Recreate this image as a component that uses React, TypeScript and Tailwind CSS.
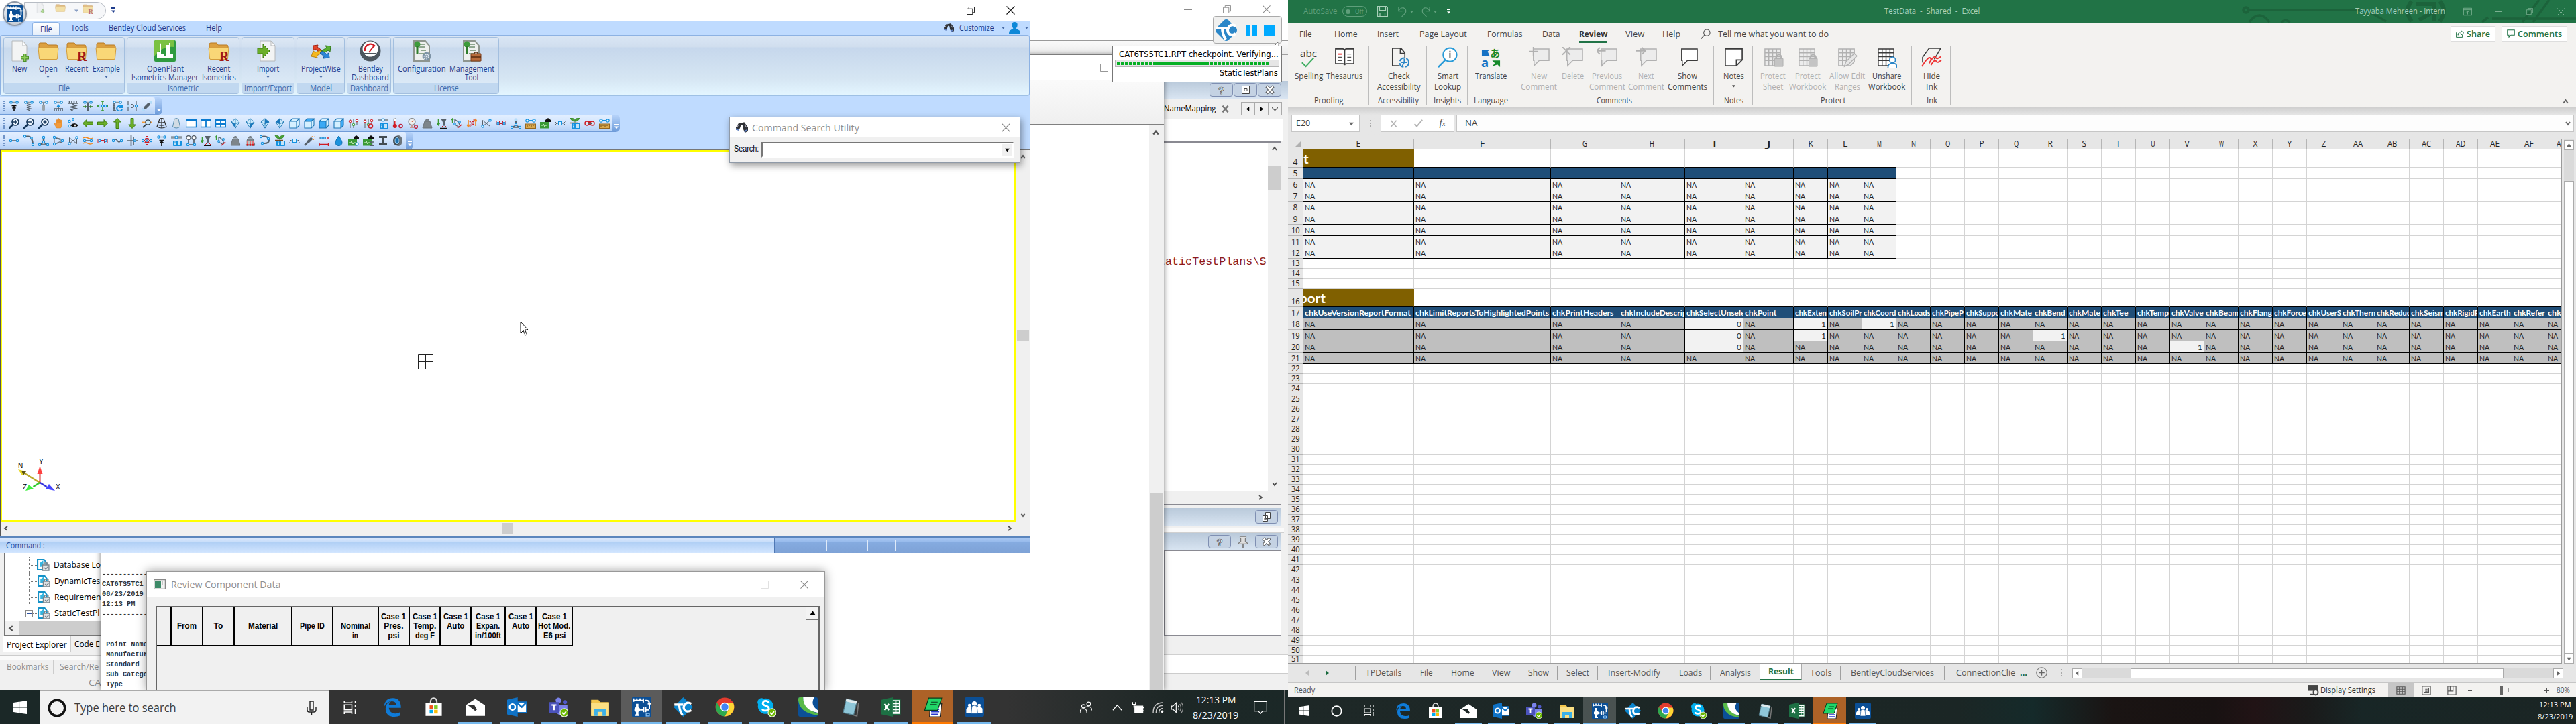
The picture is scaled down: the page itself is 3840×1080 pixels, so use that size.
import { useLayoutEffect, useRef, useState } from "react";
import type { ReactNode } from "react";

/* Text squeezed or stretched horizontally to a known width. */
function T({ w, className = "", children }: { w: number; className?: string; children: ReactNode }) {
  const ref = useRef<HTMLSpanElement>(null);
  const [s, setS] = useState(1);
  useLayoutEffect(() => {
    const n = ref.current?.offsetWidth || w;
    setS(w / n);
  }, [w, children]);
  return (
    <span className={"flex shrink-0 justify-start whitespace-pre " + className} style={{ width: w }}>
      <span ref={ref} className="block shrink-0 origin-left" style={{ transform: `scaleX(${s})` }}>
        {children}
      </span>
    </span>
  );
}

/* A row whose items are centred on the given offsets from its left edge. */
type Item = [number, ReactNode];
function Track({ items, className = "", from = 0 }: { items: Item[]; className?: string; from?: number }) {
  let prev = from;
  return (
    <div className={"flex shrink-0 " + className}>
      {items.map(([c, el], i) => {
        const m = c - prev;
        prev = c;
        return (
          <div key={i} className="flex w-0 shrink-0 justify-center" style={{ marginLeft: m }}>
            <div className="shrink-0">{el}</div>
          </div>
        );
      })}
    </div>
  );
}

function Svg({ w = 16, h = w, vb = "0 0 16 16", className = "", children }: { w?: number; h?: number; vb?: string; className?: string; children: ReactNode }) {
  return (
    <svg width={w} height={h} viewBox={vb} preserveAspectRatio="none" className={"block shrink-0 " + className} fill="none">
      {children}
    </svg>
  );
}

const Chev = ({ d, c = "#505050", s = 8 }: { d: "u" | "d" | "l" | "r"; c?: string; s?: number }) => (
  <Svg w={s} vb="0 0 8 8">
    <path d={{ u: "M1 6l3-4 3 4", d: "M1 2l3 4 3-4", l: "M6 1L2 4l4 3", r: "M2 1l4 3-4 3" }[d]} stroke={c} strokeWidth="1.8" />
  </Svg>
);
const Tri = ({ d = "d", c = "#4a6da8", s = 6 }: { d?: "u" | "d" | "l" | "r"; c?: string; s?: number }) => (
  <Svg w={s} vb="0 0 8 8">
    <path d={{ u: "M0 7L4 1l4 6z", d: "M0 2h8L4 7z", l: "M6 0v8L1 4z", r: "M2 0v8l5-4z" }[d]} fill={c} />
  </Svg>
);
const Min = ({ c, w = 12 }: { c: string; w?: number }) => <Svg w={w} h={12} vb="0 0 12 12"><path d="M0 6.500h12" stroke={c} /></Svg>;
const Restore = ({ c, s = 13 }: { c: string; s?: number }) => (
  <Svg w={s} vb="0 0 13 13"><path d="M.5 3.500h9v9h-9zM3.500 3.500v-3h9v9h-3" stroke={c} /></Svg>
);
const Max = ({ c, s = 13 }: { c: string; s?: number }) => <Svg w={s} vb="0 0 13 13"><path d="M.5 .5h12v12h-12z" stroke={c} /></Svg>;
const Close = ({ c, s = 13 }: { c: string; s?: number }) => <Svg w={s} vb="0 0 13 13"><path d="M.5.5l12 12M12.500.5l-12 12" stroke={c} strokeWidth="1.100" /></Svg>;

/* ---------- toolbar icons ---------- */
const N = (x: number, y: number, r = 1.6) => <circle cx={x} cy={y} r={r} fill="#e8f6ff" stroke="#1592e0" strokeWidth="1.2" />;
const gray = "#56616b";
const top = <><path d="M1 2.500h14" stroke="#8b969e" strokeWidth="1.600" />{N(3.5, 2.5)}{N(12.5, 2.5)}</>;
const pair = <><path d="M1 8h14" stroke={gray} strokeWidth="1.400" />{N(3, 8)}{N(13, 8)}</>;
const info = <><rect x="3" y="8" width="13" height="8" rx="1" fill="#1592e0" /><path d="M6 9.500v1M6 11.500v3M10 10h4M10 12h4M10 14h4" stroke="#fff" strokeWidth="1.400" /></>;
const weight = <path d="M5.500 4a2.500 2.500 0 115 0M4 5h8l3 10H1z" fill="#7d858b" stroke="#6b7379" />;
const house = <><rect y="6" width="13" height="9.500" fill="#3a9a35" /><path d="M8 6V3l4-3 4 3v3z" fill="#111" /><path d="M1 11h3l1-2 2 4 1-2h3" stroke="#d5f5d0" /></>;
const ruler = <><path d="M4 4h8" stroke="#1592e0" strokeWidth="2" />{N(3, 4, 2.2)}{N(13, 4, 2.2)}<rect x=".5" y="9" width="15" height="6.500" fill="#d9a94e" stroke="#94661f" /><path d="M3 10v3M6 10v2M9 10v3M12 10v2" stroke="#6d4915" /></>;
const valve = <><path d="M2.500 3.500v9l11-9v9z" stroke={gray} />{N(2.5, 12.5)}{N(13.5, 3.5)}</>;
const redPair = <><path d="M3 8h10" stroke="#d01c24" strokeWidth="2" /><path d="M1 5v6M15 5v6M5.500 5v6M10.500 5v6" stroke="#d01c24" />{N(3.5, 8)}{N(12.5, 8)}</>;
const plusNode = <><path d="M8 4v8" stroke={gray} strokeWidth="2.500" /><path d="M1.500 14L8 11l6.500 3M1.500 14h13" stroke={gray} strokeWidth="1.400" />{N(8, 3)}{N(2, 14)}{N(14, 14)}{N(8, 10)}</>;
const redCross = <><path d="M8 1v5M8 10v5M1 8h4M11 8h4" stroke="#d01c24" strokeWidth="2" strokeDasharray="2 1" /><path d="M5 5l2 2M11 5L9 7M5 11l2-2M11 11L9 9" stroke="#d01c24" strokeWidth="2" />{N(2, 8)}{N(14, 8)}{N(8, 8, 1.2)}</>;
const mag = (inner: string) => <><circle cx="10" cy="6" r="5" fill="#eef6ff" stroke="#14365a" strokeWidth="1.700" /><path d="M6 10L1 15" stroke="#14365a" strokeWidth="2.600" strokeLinecap="round" /><path d={inner} stroke="#14365a" strokeWidth="1.600" /></>;
const arrow = (r: number) => <path transform={`rotate(${r} 8 8)`} d="M.5 8L6 2.500V6h9.500v4H6v3.500z" fill="#6aae28" stroke="#3f7d10" />;
const pane = (d: string) => <><path d="M.5 2.500h15v11H.5z" fill="#fff" stroke="#0b7bd0" strokeWidth="1.400" /><path d="M0 2h16v3H0z" fill="#0b7bd0" /><path d={d} stroke="#0b7bd0" strokeWidth="1.800" /></>;
const dia = (d: string) => <><path d="M8 .8L14 6l-6 9.200L2 6z" fill="#c9e9fc" stroke="#2a7fb8" /><path d={d} fill="#1777bd" /><path d="M2 6l6 3 6-3M8 9v6M8 1v8" stroke="#2a7fb8" strokeWidth=".8" /></>;
const cube = (t: string, f: string, s: string) => <><path d="M1 5h10v10H1z" fill={f} /><path d="M1 5l4-4h10l-4 4z" fill={t} /><path d="M11 5l4-4v10l-4 4z" fill={s} /><path d="M1 5h10v10H1zM1 5l4-4h10l-4 4M15 1v10l-4 4" stroke="#1c76b5" strokeWidth="1.100" /></>;
const lt = "#d5f0ff", bl = "#3ba9f5";
const slid = <><path d="M3 1v14M8 1v14M13 1v9" stroke="#707a82" strokeWidth="1.300" /><circle cx="3" cy="5" r="1.800" fill="#fff" stroke="#d01c24" /><circle cx="8" cy="10" r="1.800" fill="#fff" stroke="#3a9a35" /><circle cx="13" cy="4" r="1.800" fill="#fff" stroke="#d01c24" /></>;
const infoNode = <><path d="M0 3h16" stroke="#8b969e" strokeWidth="3.500" />{N(8, 3, 2)}{info}</>;
const drill = <><path d="M2.500 2v8M.5 7.500l2 3 2-3" stroke="#3a9a35" strokeWidth="1.600" /><path d="M6 1h9l-2 4-1.500 7h-1L8.500 5z" fill={gray} /><path d="M9 12l-2 2M13 12l2 2" stroke="#d01c24" /><path d="M5 15.300h11" stroke="#111" strokeWidth="1.200" /></>;
const rota = <><path d="M1.500 1v6M0 3l1.500-2L3 3" stroke="#3a9a35" strokeWidth="1.300" /><path d="M5 2l5 4 3 6M5 2v8l7 4" stroke={gray} strokeWidth="1.200" /><path d="M9 15l6-5" stroke="#d01c24" strokeWidth="1.500" />{N(5, 9, 1.3)}{N(12, 6, 1.3)}</>;
const plant = <><path d="M8 8V4M8 5C4 5 2 3 1 0c4 0 7 1 7 5zM8 4c0-3 3-4 7-4-1 3-3 5-7 5" fill="#4aa336" stroke="#2f7d22" strokeWidth=".7" /><path d="M1 7.500h12" stroke="#7b4a21" strokeWidth="1.500" />{info}</>;
const flow = <><path d="M.5 5.500L3 8 .5 10.500M15.500 5.500L13 8l2.500 2.500M3 8h10" stroke={gray} /><rect x="5.500" y="5.500" width="5" height="5" fill="#d5f0ff" stroke="#1592e0" /></>;

const row1: ReactNode[] = [
  <>{top}<path d="M4.500 7.500h7M8 16V9M5.500 11.500L8 9l2.500 2.500" stroke="#111" strokeWidth="1.700" /></>,
  <>{top}<path d="M5 4.500l6 1.500-6 1.500 6 1.500-6 1.500 6 1.500-5 1.500 4 1.500" stroke={gray} strokeWidth="1.200" /></>,
  <>{top}<path d="M8 3v4" stroke={gray} strokeWidth="1.500" /><rect x="6" y="6" width="4" height="9" rx="1.500" fill="#9aa3a9" /></>,
  <>{top}<path d="M8 5l2.500 4h-5z" fill="#1592e0" /><path d="M1 12h14M2 12v4M5 12v4M8 9v7M11 12v4M14 12v4" stroke={gray} strokeWidth="1.600" /></>,
  <><path d="M1 4h14M2.500 0v4M6 0v4M9.500 0v4M13 0v4" stroke={gray} strokeWidth="1.600" /><path d="M8 4v2l4 1.500-8 2 8 2-7 2L8 16" stroke={gray} strokeWidth="1.700" /></>,
  <>{top}<path d="M8 3v12" stroke={gray} strokeWidth="2" /><path d="M0 9h6M10 9h6M0 6.500v5M16 6.500v5M4 7v4M12 7v4" stroke="#2f7d22" strokeWidth="1.300" /></>,
  <><path d="M8 0v16M0 8h16M6 1h4M6 15h4M1 6v4M15 6v4" stroke="#3a9a35" strokeWidth="1.500" />{N(4, 8)}{N(12, 8)}{N(8, 8)}</>,
  <>{top}<path d="M1 7h4M1 11h4M1 15h5M3 3v12" stroke={gray} strokeWidth="1.600" /><path d="M14.500 9.500a4 4 0 10.500 3.500M15 6v4h-4" stroke="#1592e0" strokeWidth="2" /></>,
  <><path d="M2 0v16M14 0v16" stroke={gray} strokeWidth="1.200" /><path d="M6.500 5.500h1.500q2.500 0 2.500 2.500t-2.500 2.500h-1.500z" stroke={gray} />{N(2, 8)}{N(14, 8)}</>,
  <><path d="M3 13L13 3" stroke={gray} strokeWidth="1.300" /><path d="M4.500 11.500l7-7" stroke={gray} strokeWidth="4.500" />{N(2, 14)}{N(14, 2)}</>,
];
const row2: ReactNode[] = [
  mag("M10 3v6M7 6h6"), mag("M7 6h6"), mag("M10 3.500v5M7.500 6h5"),
  <path d="M4 15C2 12 .5 9.500.5 8.500s1.500-.5 3 1V3q1-1 2 0v4-6q1-1 2 0v6-5q1-1 2 0v5-3.500q1-1 2 0V11q0 2-1.500 4z" transform="translate(1.500 0)" fill="#f29a3a" stroke="#d87d1c" strokeWidth=".5" />,
  <>{N(8, 1.8)}{N(2.5, 5)}{N(2.5, 12)}<path d="M4 11q6-6 12 0-6 6-12 0z" fill="#111" /><circle cx="11" cy="11" r="1.600" fill="#ddd" /></>,
  arrow(0), arrow(180), arrow(90), arrow(270),
  <><path d="M0 6.500h16" stroke="#f29a3a" strokeWidth="2" /><circle cx="9.500" cy="6.500" r="3.600" fill="#cde8fa" stroke="#35464f" strokeWidth="1.300" /><path d="M7 9.500L2 14" stroke="#35464f" strokeWidth="2" /></>,
  <path d="M5 1.500q3-2 6 0l4 11.500q-7 4-14 0zM3.500 6q4.500 2 9 0M2 10q6 2.500 12 0M8 1v14" stroke="#333" strokeWidth="1.200" />,
  <path d="M5 1.500q3-2 6 0l2.500 11.500q-5.500 4-11 0z" fill="#d2dce4" stroke="#5c8fae" />,
  pane(""), pane("M8 4v9"), pane("M8 4v9M0 9h16"),
  dia("M2 6l6 3v6z"), dia("M14 6l-6 3v6z"), dia("M8 1l6 5-6 3z"), dia("M8 1L2 6l6 3z"),
  cube(lt, lt, lt), cube(bl, lt, lt), cube(lt, bl, lt), cube(lt, lt, bl),
  slid,
  <>{slid}<circle cx="11.500" cy="12" r="3" stroke="#d01c24" strokeWidth="1.500" /></>,
  infoNode,
  <><rect x="2" y="0" width="3.500" height="12" rx="1.700" fill="#fff" stroke="#8b969e" /><circle cx="3.800" cy="12" r="3" fill="#d01c24" /><path d="M3.800 4v8" stroke="#d01c24" strokeWidth="1.500" /><circle cx="12.500" cy="12" r="2.500" stroke="#c2213a" strokeWidth="1.600" /></>,
  <><circle cx="7" cy="5.500" r="5" fill="#eee" stroke="#8b8f92" strokeWidth="1.300" /><path d="M7 6l2-3M4 14h6M7 11v3" stroke="#d0552c" /><circle cx="13" cy="13" r="2.300" stroke="#c2213a" strokeWidth="1.500" /></>,
  weight, drill, rota,
  <><path d="M3 3v9M1 10l2 3 2-3M14 12V3M12 5l2-3 2 3" stroke="#f08a24" strokeWidth="1.600" /><path d="M5 14l7-12M5 5l7 6" stroke="#d01c24" strokeWidth="1.800" strokeDasharray="2 1" /></>,
  valve, redPair, plusNode, ruler, house, flow, plant,
  <><path d="M3 6h10M3 10h10" stroke="#d01c24" strokeWidth="2" /><circle cx="4" cy="8" r="3" fill="#d8e8f8" stroke="#d01c24" strokeWidth="1.400" /><circle cx="12" cy="8" r="3" fill="#d8e8f8" stroke="#d01c24" strokeWidth="1.400" /><path d="M5 8h6" stroke={gray} strokeWidth="2" /></>,
  ruler,
];
const row3: ReactNode[] = [
  pair,
  <><path d="M1 1.500h6q6 0 7 12" stroke={gray} strokeWidth="2.200" />{N(2, 1.5)}{N(14, 14)}{N(12, 4, 1.3)}</>,
  plusNode,
  <><path d="M2 3v10l12-5zM2 3l12 3v4L2 13" stroke={gray} />{N(2, 3)}{N(2, 13)}{N(14, 8)}</>,
  valve,
  <><path d="M1 4q3-2 7 0t7 0M1 12q3-2 7 0t7 0" stroke="#f08a24" strokeWidth="1.500" />{pair}</>,
  redPair,
  <><path d="M3 8q2.500-4 5 0t5 0" stroke={gray} strokeWidth="1.500" />{N(2, 8)}{N(14, 8)}</>,
  <><path d="M0 8h16M6.500 0v16M10 2v12" stroke={gray} strokeWidth="1.700" />{N(12, 8, 1.3)}</>,
  redCross,
  row1[0],
  infoNode,
  <><circle cx="4" cy="3.500" r="3" fill="#fff" stroke={gray} strokeWidth="1.300" /><circle cx="12" cy="3.500" r="3" fill="#fff" stroke={gray} strokeWidth="1.300" /><path d="M4 7v7M12 7v7M3 14h11" stroke={gray} strokeWidth="1.700" />{N(3, 14)}{N(13, 14)}</>,
  drill, rota, weight,
  <>{weight}<path d="M4 8v7M8 8v7M12 8v7" stroke="#fff" strokeWidth="3" /><path d="M4 8v7M8 8v7M12 8v7M2.800 13L4 15.500 5.200 13M6.800 13L8 15.500 9.200 13M10.800 13l1.200 2.500 1.200-2.500" stroke="#d01c24" strokeWidth="1.200" /></>,
  <><path d="M2 2q11-2 12 5 0 5-7 5" stroke={gray} strokeWidth="2" />{N(2, 2)}{N(13, 5)}{N(4, 12)}</>,
  plant, flow,
  <><path d="M1 15L8 8" stroke={gray} strokeWidth="2.500" /><path d="M6 10l6-6" stroke={gray} strokeWidth="4" /><path d="M12 1l1 2 3-1M13 5l2 2" stroke="#f08a24" /></>,
  <><path d="M1 4h10" stroke={gray} />{N(4, 4, 1.3)}{N(9, 4, 1.3)}<path d="M12 4h4M0 13.500h15M1 11v5M14.500 11v5" stroke="#d01c24" strokeWidth="1.400" /></>,
  <path d="M8 1q5 7 5 10a5 4.500 0 01-10 0q0-3 5-10z" fill="#1c93de" stroke="#0f6fb0" />,
  <>{house}{N(13, 13, 2)}</>,
  <>{house}<path d="M11 10h5M11 15.500h5M13.500 10v6" stroke={gray} strokeWidth="1.500" /></>,
  <path d="M2 1h12v3h-4v8h4v3H2v-3h4V4H2z" fill="#434c53" />,
  <><ellipse cx="9" cy="8" rx="6" ry="8" fill="#6c757c" /><ellipse cx="6" cy="8" rx="5" ry="7" fill="#434c53" /><ellipse cx="7" cy="8" rx="3" ry="4.500" fill="#1c6fae" stroke="#9fd2f2" /></>,
];

function ToolRow({ icons }: { icons: ReactNode[] }) {
  return (
    <div className="flex h-[26px] w-fit overflow-hidden rounded-r-md border-b border-[#6f9bd8]">
      <div className="flex items-center rounded-r bg-gradient-to-b from-[#e3efff] via-[#d3e5fd] to-[#b3d0f6] pr-[1px]">
        <div className="mr-[2px] flex h-[16px] w-[8px] justify-end pr-px"><div className="h-full w-[2px] border-l-2 border-dotted border-[#6f93c8]" /></div>
        {icons.map((ic, i) => (
          <div key={i} className="flex w-[22px] justify-center"><Svg>{ic}</Svg></div>
        ))}
      </div>
      <div className="flex w-[11px] flex-col items-center justify-end bg-gradient-to-b from-[#b8d4fa] to-[#6f9ddb] pb-[3px]">
        <div className="mb-px h-px w-[6px] bg-white" /><Tri c="#fff" />
      </div>
    </div>
  );
}

/* ---------- ribbon icons ---------- */
const pageSvg = <><path d="M5 1h16l6 7v23H5z" fill="#f3f4f4" stroke="#b5b8ba" /><path d="M21 1l6 7h-6z" fill="#fff" stroke="#b5b8ba" /></>;
const folderSvg = <><path d="M2 6q0-2 2-2h9l2 3h13q2 0 2 2v8H2z" fill="#dca040" stroke="#b97a22" /><path d="M1 11h30l-1.500 16q0 1.500-1.500 1.500H4Q2.500 28.500 2.500 27z" fill="#f9d777" stroke="#d39d3c" /></>;
const rMark = <text x="17" y="31" fontSize="20" fontFamily="Liberation Serif" fontWeight="bold" fill="#a01818">R</text>;
const licSvg = <><path d="M4 1h17l6 7v23H4z" fill="#eef0ee" stroke="#8e958e" strokeWidth="2" /><path d="M12 6h9M12 10h9M14 15h8M12 20h9" stroke="#8fa68f" strokeWidth="2" /><circle cx="9" cy="6" r="4.500" fill="#3d9b3a" /><path d="M9 8v12" stroke="#2e7d2c" strokeWidth="3" /></>;
const ri: Record<string, ReactNode> = {
  New: <>{pageSvg}<path d="M24 20v12M18 26h12" stroke="#4c8f2b" strokeWidth="5" /><path d="M24 21v10M19 26h10" stroke="#8fce5a" strokeWidth="2.500" /></>,
  Open: folderSvg,
  Recent: <>{folderSvg}{rMark}</>,
  OPI: <><rect width="32" height="32" rx="2" fill="#2f9a3f" /><path d="M0 2q0-2 2-2h28v10Q12 8 0 24z" fill="#7ac142" /><path d="M4 27V18h4V8l2-4v16h5v4h3V7h4V4h2v16h4v7z" fill="#fff" /></>,
  Import: <>{pageSvg}<path d="M1 12h8V6l10 10L9 26v-6H1z" fill="#6aae28" stroke="#3f7d10" /></>,
  PW: <><path d="M4 8l7-1-1 3 8 6-3 3-8-6-3 2z" fill="#e2462c" stroke="#a82312" /><path d="M30 9l-1 8-3-2-7 5-3-4 8-5-2-3z" fill="#59b030" stroke="#33781a" /><path d="M1 24l3-8 3 2 8-3 2 4-8 4 1 3z" fill="#f5b81f" stroke="#b9800e" /><path d="M28 26l-9 1 1-3-6-5 4-3 6 5 3-2z" fill="#2d86d8" stroke="#155a9e" /></>,
  Dash: <><circle cx="16" cy="16" r="15.500" fill="#4c565e" /><circle cx="16" cy="13" r="11.500" fill="#fff" /><path d="M8 16A8.500 8.500 0 0123 9" stroke="#d01c24" strokeWidth="2.500" /><path d="M14 18l7-9" stroke="#d01c24" strokeWidth="2" /><path d="M7 20h18" stroke="#4c565e" strokeWidth="2" /></>,
  Conf: <>{licSvg}<circle cx="23" cy="24" r="5" fill="#e1e9f0" stroke="#7d93a6" strokeWidth="3" strokeDasharray="3 1" /><circle cx="23" cy="24" r="2" stroke="#7d93a6" /></>,
  Mgmt: <>{licSvg}<path d="M15 20h15v11H15z" fill="#b86b3a" stroke="#7c3f1a" /><path d="M20 20v-2h5v2M15 25h15" stroke="#5a2c10" strokeWidth="1.500" /></>,
};
type RB = [number, string, [string, number][], boolean?];
const groups: { w: number; name: string; nw: number; items: RB[] }[] = [
  { w: 181, name: "File", nw: 17, items: [[23, "New", [["New", 22]]], [65.5, "Open", [["Open", 28]], true], [107.5, "Recent", [["Recent", 34]]], [152, "Open", [["Example", 41]], true]] },
  { w: 168, name: "Isometric", nw: 46, items: [[56, "OPI", [["OpenPlant", 55], ["Isometrics Manager", 100]]], [136, "Recent", [["Recent", 34], ["Isometrics", 51]]]] },
  { w: 79, name: "Import/Export", nw: 71, items: [[38, "Import", [["Import", 33]], true]] },
  { w: 72, name: "Model", nw: 33, items: [[35.5, "PW", [["ProjectWise", 59]], true]] },
  { w: 66, name: "Dashboard", nw: 57, items: [[34, "Dash", [["Bentley", 37], ["Dashboard", 56]]]] },
  { w: 158, name: "License", nw: 37, items: [[42, "Conf", [["Configuration", 72]]], [116, "Mgmt", [["Management", 67], ["Tool", 20]]]] },
];

const Pipes = ({ w, h }: { w: number; h: number }) => (
  <Svg w={w} h={h} vb="0 0 24 24">
    <rect width="24" height="24" rx="1" fill="#0b4f96" />
    <path d="M2 1.500v4M2 4h12M6 1.500v3M10 1.500v3M14 1.500v5M16 4h2q3.500 0 3.500 4v6M19.500 8h4" stroke="#fff" strokeWidth="1.700" />
    <path d="M5 8h3v4l2 2v3l-2 1v3h1v2H4v-2h1v-3l-2-1v-3l2-2z" fill="#fff" /><path d="M10 15.500h4M14.500 12.500v6M17 12.500v6M17 15.500h4.500" stroke="#fff" strokeWidth="1.500" /><path d="M17.500 20h4v3h-4z" stroke="#8fc5f5" />
  </Svg>
);
const Binoc = ({ s }: { s: number }) => (
  <Svg w={s}><path d="M0 8l4-6 3 1-1 4-2 5-4-1zM8 2l3-1 5 7v5l-4 2-2-4z" fill="#2f3135" /><path d="M0 10l4 1.500M11 13.500l4-2" stroke="#5d7fc4" strokeWidth="2" /><path d="M6 3.500h4" stroke="#2f3135" strokeWidth="3" /><path d="M3 5l-1.500 3M12 5l2 3" stroke="#aab" /></Svg>
);

function MainWindow() {
  const txt = "text-[12px] leading-[13px] text-[#1e3c8c]";
  return (
    <div className="absolute left-0 top-0 flex h-[825px] w-[1536px] flex-col bg-white">
      <div className="flex h-[31px] shrink-0 items-center">
        <Track className="w-full items-center" items={[
          [60, <Svg h={16} w={14} vb="0 0 32 32" className="-mt-[8px]">{ri.New}</Svg>],
          [90, <Svg h={14} w={16} vb="0 0 32 32" className="-mt-[8px]">{folderSvg}</Svg>],
          [114, <Tri />],
          [131, <Svg h={16} w={16} vb="0 0 32 32" className="-mt-[6px]">{ri.Recent}</Svg>],
          [169, <div className="flex flex-col items-center gap-px"><div className="h-[2px] w-[6px] bg-[#1e3c8c]" /><Tri c="#1e3c8c" /></div>],
          [1389, <Min c="#111" />], [1446.5, <Restore c="#111" s={12} />], [1506, <Close c="#111" />],
        ]} />
      </div>
      <div className="flex h-[21px] shrink-0 bg-[#bfdbff]">
        <div className={"mt-[2px] ml-[48px] flex h-[20px] w-[41px] items-center justify-center rounded-t border border-b-0 border-[#8db2e3] bg-gradient-to-b from-white to-[#e4eefa] " + txt}><T w={18}>File</T></div>
        <Track className={"items-center " + txt} from={89} items={[
          [119, <T w={26}>Tools</T>], [219, <T w={115}>Bentley Cloud Services</T>], [319, <T w={24}>Help</T>],
          [1414, <Binoc s={15} />], [1456, <T w={52}>Customize</T>], [1495, <Tri s={5} />],
          [1512, <Svg w={17}><path d="M8 0q4 0 4 4 0 3-2 5l5 3q1 1 1 4H0q0-3 1-4l5-3Q4 7 4 4q0-4 4-4z" fill="#0d88d8" /></Svg>], [1530, <Tri s={5} />],
        ]} />
      </div>
      <div className="flex h-[91px] shrink-0 bg-[#bfdbff] pr-[1px]">
        <div className="flex w-full gap-[3px] rounded border border-[#8db2e3] border-b-[#9ec0e4] bg-[linear-gradient(180deg,#dae6f5_0,#d0deee_17px,#c6d7ec_18px,#d6e6f3_65px,#e3f5ff_88px)] px-[4px] py-[2px]">
          {groups.map((g) => (
            <div key={g.name} className="flex h-[85px] shrink-0 flex-col overflow-hidden rounded border border-[#a3bfdf] bg-[linear-gradient(180deg,#dde8f5_0,#d2e0f0_14px,#c8d9ed_15px,#dbe9f6_68px)]" style={{ width: g.w }}>
              <div className="h-[68px] shrink-0 pt-[4px]">
                <Track className="items-start" items={g.items.map(([c, ic, ls, dd]) => [c, (
                  <div className={"flex flex-col items-center " + txt}>
                    <Svg w={32} vb="0 0 32 32">{ri[ic]}</Svg>
                    <div className="h-[4px]" />
                    {ls.map(([l, w]) => <T key={l} w={w}>{l}</T>)}
                    {dd && <div className="mt-[3px]"><Tri s={5} /></div>}
                  </div>
                )])} />
              </div>
              <div className="flex h-[16px] items-center justify-center bg-[#c1d8f0] text-[12px] leading-[13px] text-[#3e6aaa]"><T w={g.nw}>{g.name}</T></div>
            </div>
          ))}
        </div>
      </div>
      <div className="flex h-[80px] shrink-0 flex-col bg-[#bfdbff] pt-[2px]">
        <ToolRow icons={row1} /><ToolRow icons={row2} /><ToolRow icons={row3} />
      </div>
      <div className="flex h-[577px] shrink-0 flex-col border border-[#555] border-t-[#777] bg-[#f0f0f0]">
        <div className="flex h-[554px] shrink-0">
          <div className="relative h-full w-[1513px] border-2 border-[#ffff00] bg-white">
            <div className="absolute left-[620px] top-[302px]"><Svg w={23} vb="0 0 23 23"><path d="M.5.5h22v22H.5zM11.500 0v23M0 11.500h23" stroke="#222" /></Svg></div>
            <div className="absolute left-[772px] top-[253px]"><Svg w={13} h={22} vb="0 0 13 22"><path d="M1 1v17l4-4 3 7 2.500-1-3-7H12z" fill="#fff" stroke="#111" /></Svg></div>
            <div className="absolute left-[20px] top-[456px]">
              <svg width="76" height="58" viewBox="0 -2 76 58" className="block" fontFamily="Liberation Sans" fontSize="10">
                <path d="M36.500 36L12 21" stroke="#b9a92a" strokeWidth="2.500" /><path d="M4 16l11 3-5 6z" fill="#e8d92a" /><path d="M9 18l7 1-4 6z" fill="#5d5310" />
                <path d="M36.500 36V20" stroke="#d42a2a" strokeWidth="2" /><path d="M36.500 11l4 12h-8z" fill="#ff4040" />
                <path d="M36.500 36l10 6" stroke="#3333dd" strokeWidth="2.500" /><path d="M59 48l-14-3 5-7z" fill="#4646ff" />
                <path d="M36.500 36l-10 6" stroke="#30c830" strokeWidth="2.500" /><path d="M15 48l5-9 7 6z" fill="#40f040" />
                <text x="4" y="14" fill="#000">N</text><text x="35" y="8" fill="#000">Y</text><text x="60" y="46" fill="#000">X</text><text x="11" y="46" fill="#000">Z</text>
              </svg>
            </div>
          </div>
          <div className="flex w-[21px] flex-col items-center justify-between border-l border-white py-[6px]">
            <Chev d="u" /><div className="-mt-[1px] mb-px h-[17px] w-[18px] bg-[#cdcdcd]" /><Chev d="d" />
          </div>
        </div>
        <div className="flex h-[20px] items-center justify-between pl-[4px] pr-[26px]">
          <Chev d="l" /><div className="mr-px h-[17px] w-[17px] bg-[#cdcdcd]" /><Chev d="r" />
        </div>
      </div>
      <div className="flex h-[25px] border-t-2 border-[#5b86bd]">
        <div className="flex w-[1155px] items-center border-r border-[#4f78b4] bg-[linear-gradient(180deg,#dbe8fb_0,#c9defa_6px,#b0cff5_7px,#d3e6ff_23px)] pl-[9px] text-[12px] text-[#1e4b9c]"><T w={58}>Command :</T></div>
        <div className="flex flex-1 items-center bg-[linear-gradient(180deg,#a9c8f2_0,#98bbec_6px,#85abe0_7px,#7ea2d6_23px)]">
          {["ml-[77px]", "ml-[60px]", "ml-[40px]", "ml-[100px]"].map((m) => <div key={m} className={"h-[16px] w-px bg-[#dfeaf8] " + m} />)}
        </div>
      </div>
      <div className="absolute left-[36px] top-[3px] h-[26px] w-[122px] rounded-r-full border border-[#b7bcc4] bg-[#e9ebef]/40" />
      <div className="absolute left-[4px] top-[2px] flex h-[37px] w-[36px] items-center justify-center rounded-full border-2 border-[#8e98a6] bg-gradient-to-b from-[#f2f4f7] to-[#c8ced6] shadow"><Pipes w={24} h={25} /></div>
    </div>
  );
}

function SearchDialog() {
  return (
    <div className="absolute left-[1087px] top-[174px] flex h-[69px] w-[434px] flex-col border border-[#8f9aa8] bg-[#f0f0f0] shadow-[2px_4px_10px_rgba(0,0,0,0.4)]">
      <div className="flex h-[30px] items-center bg-white">
        <Track className="items-center text-[15px] text-[#8f8f8f]" items={[[18, <Binoc s={18} />], [113, <T w={160}>Command Search Utility</T>], [411, <Close c="#8a8a8a" />]]} />
      </div>
      <div className="flex flex-1 items-center pb-[3px] pl-[6px] text-black">
        <div className="font-['Liberation_Sans'] text-[12px]"><T w={37}>Search:</T></div>
        <div className="ml-[4px] mt-[3px] flex h-[23px] w-[376px] justify-end border-2 border-[#fff] border-l-[#777] border-t-[#777] bg-white">
          <div className="flex h-[19px] w-[16px] items-center justify-center border border-[#fff] border-b-[#555] border-r-[#555] bg-[#f0f0f0]"><Tri c="#000" s={7} /></div>
        </div>
      </div>
    </div>
  );
}

/* ---------- TestComplete ---------- */
const HBtn = ({ k, w = 35 }: { k: "?" | "o" | "x" | "r"; w?: number }) => (
  <div className="flex h-[20px] items-center justify-center rounded-sm border border-[#7f8fb2] bg-[#c4d2e3]" style={{ width: w }}>
    {k === "?" ? <span className="font-['Liberation_Sans'] text-[15px] font-bold leading-none text-white [-webkit-text-stroke:0.7px_#444]">?</span> : (
      <Svg w={14} vb="0 0 14 14">
        {k === "o" && <path d="M1.500 1.500h11v11h-11zM5 5.500h4v3H5z" fill="#fff" stroke="#444" />}
        {k === "x" && <><path d="M2 2l10 10M12 2L2 12" stroke="#444" strokeWidth="4.500" /><path d="M2.500 2.500l9 9M11.500 2.500l-9 9" stroke="#fff" strokeWidth="2.500" /></>}
        {k === "r" && <path d="M5.500.5h7v9h-7zM1.500 4.500h7v9h-7zM4 8h2v3H4z" fill="#fff" stroke="#444" />}
      </Svg>
    )}
  </div>
);
const TreeIcon = () => <Svg w={19} h={18} vb="0 0 18 18"><path d="M1 1h9l3 4v11H1z" fill="#fff" stroke="#1592c8" strokeWidth="2" /><path d="M4 6l5-4v9l-5 1z" fill="#35b5e0" /><path d="M8 9h9v8H8z" fill="#dfe3e6" stroke="#7b858c" strokeWidth="1.300" /><path d="M10 9V6h5v3M10.500 13l2 2 3-3" stroke="#7b858c" strokeWidth="1.300" /></Svg>;

function TestComplete() {
  const tree: [string, number][] = [["Database Lo", 70], ["DynamicTes", 68], ["Requiremen", 69], ["StaticTestPl", 68]];
  return (
    <div className="absolute left-0 top-0 flex h-[1030px] w-[1920px] flex-col bg-[#f0f0f0] text-[13px] text-black">
      <div className="flex h-[61px] shrink-0 border-b border-[#9a9a9a] bg-white pt-[8px]">
        <Track className="items-start" items={[[1771, <Min c="#8a8a8a" />], [1829, <Restore c="#8a8a8a" s={12} />], [1888, <Close c="#8a8a8a" s={12} />]]} />
      </div>
      <div className="h-[21px] shrink-0 border-b border-[#a0a0a0] bg-gradient-to-b from-[#fafafa] to-[#ececec]" />
      <div className="flex flex-1 justify-between">
        <div className="flex w-[150px] flex-col pt-[742px]">
          <div className="ml-[6px] flex h-[124px] shrink-0 flex-col overflow-hidden border-b border-l border-[#777] bg-white">
            <div className="flex h-[103px] shrink-0 flex-col pt-[7px]">
              {tree.map(([l, w], i) => (
                <div key={l} className="flex h-[24px] shrink-0 items-center">
                  {i < 3
                    ? <div className="ml-[36px] flex h-full w-[13px] items-center border-l border-dotted border-[#777]"><div className="w-[11px] border-t border-dotted border-[#777]" /></div>
                    : <div className="ml-[31px] flex w-[18px] items-center"><div className="flex h-[11px] w-[11px] items-center justify-center border border-[#888] bg-white"><div className="h-px w-[7px] bg-[#2a4fa0]" /></div><div className="w-[6px] border-t border-dotted border-[#777]" /></div>}
                  <TreeIcon /><div className="w-[6px]" /><T w={w}>{l}</T>
                </div>
              ))}
            </div>
            <div className="flex h-[20px] shrink-0 items-center bg-[#f0f0f0] pl-[5px]"><Chev d="l" s={9} /><div className="ml-[7px] h-[20px] flex-1 bg-[#cdcdcd]" /></div>
          </div>
          <div className="flex h-[30px] shrink-0 flex-col border-b border-[#ccc]">
            <div className="flex h-[25px] border-b border-[#ccc]">
              <div className="ml-[4px] flex w-[102px] items-center border-r border-[#ccc] bg-white pb-px pl-[6px] pt-[4px]"><T w={90}>Project Explorer</T></div>
              <div className="flex items-center pl-[5px] pt-[2px]"><T w={38}>Code E</T></div>
            </div>
          </div>
          <div className="h-[6px] shrink-0 bg-[#fafafa]" />
          <div className="flex h-[22px] shrink-0 items-center border-b border-t border-[#ccc] text-[#8d8d8d]"><div className="flex h-full w-[80px] items-center border-r border-[#ccc] pl-[10px]"><T w={62}>Bookmarks</T></div><div className="pl-[9px]"><T w={58}>Search/Re</T></div></div>
          <div className="flex h-[24px] shrink-0 items-center text-[#8d8d8d]"><div className="h-[20px] w-[66px] border-r border-[#d0d0d0]" /><div className="h-[20px] w-[67px] border-r border-[#d0d0d0]" /><div className="pl-[5px] pt-[2px]"><T w={18}>CA</T></div></div>
        </div>
        <div className="flex w-[185px] flex-col pt-[39px]">
          <div className="flex h-[26px] shrink-0 items-center justify-end gap-px bg-gradient-to-b from-[#b9c9da] to-[#d9e5f2] pr-[10px]"><HBtn k="?" /><HBtn k="o" /><HBtn k="x" /></div>
          <div className="flex h-[30px] shrink-0 items-center">
            <T w={77}>NameMapping</T><div className="w-[9px]" /><Svg w={11}><path d="M2 1l12 14M14 1L2 15" stroke="#777" strokeWidth="3.500" /></Svg>
            <div className="ml-[7px] h-[23px] w-px self-end bg-[#ddd]" />
            <div className="ml-[11px] flex">
              {["l", "r", "v"].map((k) => <div key={k} className="-ml-px flex h-[20px] w-[21px] items-center justify-center border border-[#aaa]">{k === "v" ? <Svg w={9} vb="0 0 8 8"><path d="M0 2l4 4 4-4" stroke="#555" /></Svg> : <Tri d={k as "l" | "r"} c="#000" s={7} />}</div>)}
            </div>
          </div>
          <div className="mr-[7px] h-[34px] shrink-0 border-r border-t border-[#d5d5d5] bg-white" />
          <div className="mr-[10px] flex h-[543px] shrink-0 flex-col border-b-2 border-r border-t-2 border-[#8a8a92] border-r-[#777]">
            <div className="flex flex-1">
              <div className="flex-1 overflow-hidden bg-white pt-[166px] font-['Liberation_Mono'] text-[16.500px] text-[#8f1a1a]"><div className="-ml-[8px]"><T w={160}>taticTestPlans\S</T></div></div>
              <div className="flex w-[19px] flex-col items-center bg-[#f0f0f0] pt-[5px]"><Chev d="u" /><div className="mt-[21px] h-[37px] w-[19px] bg-[#cdcdcd]" /><div className="flex-1" /><Chev d="d" /><div className="h-[6px]" /></div>
            </div>
            <div className="flex h-[20px] items-center justify-end bg-[#f0f0f0] pr-[26px]"><Chev d="r" /></div>
          </div>
          <div className="mr-[10px] mt-[4px] flex h-[26px] shrink-0 items-center justify-end bg-gradient-to-b from-[#b9c9da] to-[#d9e5f2] pr-[5px]"><HBtn k="r" w={34} /></div>
          <div className="mr-[6px] mt-[3px] h-[8px] shrink-0 border-y border-[#d0d0d0] bg-[#fafafa]" />
          <div className="mr-[10px] flex h-[26px] shrink-0 items-center justify-end bg-gradient-to-b from-[#b9c9da] to-[#d9e5f2] pr-[5px]">
            <HBtn k="?" w={34} /><Svg w={18} h={18} className="mx-[9px]"><path d="M4 1h8v2l-1 1v4l3 2v1H2v-1l3-2V4L4 3z" fill="#ddd" stroke="#777" /><path d="M8 11v5" stroke="#777" strokeWidth="1.500" /></Svg><HBtn k="x" w={34} />
          </div>
          <div className="mr-[10px] h-[127px] shrink-0 border border-[#8a8a92] bg-white" />
          <div className="mt-[3px] h-[26px] shrink-0 border-b border-t border-[#d0d0d0]" />
          <div className="h-[28px] shrink-0 border-b border-[#ccc] bg-white" />
        </div>
      </div>
    </div>
  );
}

function Report() {
  return (
    <div className="absolute left-[150px] top-[82px] flex h-[948px] w-[1585px] flex-col border-l border-[#777] bg-white shadow-[0_0_8px_rgba(0,0,0,0.5)]">
      <div className="flex h-[38px] shrink-0 items-center"><Track from={151} className="items-center" items={[[1588, <Min c="#8a8a8a" />], [1646, <Max c="#8a8a8a" s={12} />]]} /></div>
      <div className="h-[67px] shrink-0 border-b-2 border-[#808080] bg-gradient-to-b from-[#fafafa] to-[#efefef]" />
      <div className="flex flex-1 justify-between">
        <div className="flex flex-col pl-[1px] pt-[662px] font-['Liberation_Mono'] text-[10.300px] font-bold leading-[15px] text-[#333]">
          {["-----------", "CAT6TS5TC1", "08/23/2019", "12:13 PM", "-----------", "", ""].map((l, i) => <div key={i} className="h-[15px] whitespace-pre">{l}</div>)}
          {[" Point Name", " Manufactur", " Standard", " Sub Catego", " Type"].map((l) => <div key={l} className="h-[15px] whitespace-pre">{l}</div>)}
        </div>
        <div className="flex w-[22px] flex-col items-center bg-[#f0f0f0] pr-[2px] pt-[6px]"><Chev d="u" s={10} /><div className="mt-[533px] w-[19px] flex-1 bg-[#cdcdcd]" /></div>
      </div>
    </div>
  );
}

const rcols: [number, string[], number[]][] = [
  [22, [""], [0]], [47, ["From"], [29]], [47, ["To"], [14]], [86, ["Material"], [44]], [61, ["Pipe ID"], [37]], [67.5, ["Nominal", "in"], [44, 9]],
  [46.5, ["Case 1", "Pres.", "psi"], [37, 29, 17]], [46, ["Case 1", "Temp.", "deg F"], [37, 34, 29]], [46, ["Case 1", "Auto"], [37, 26]], [51, ["Case 1", "Expan.", "in/100ft"], [37, 35, 39]], [46, ["Case 1", "Auto"], [37, 26]], [54, ["Case 1", "Hot Mod.", "E6 psi"], [37, 48, 33]],
];
function Review() {
  return (
    <div className="absolute left-[218px] top-[852px] flex h-[178px] w-[1012px] flex-col border border-b-0 border-[#999] bg-[#f0f0f0] shadow-[0_0_14px_rgba(0,0,0,0.4)]">
      <div className="flex h-[37px] shrink-0 items-center bg-white">
        <Track className="items-center text-[15px] text-[#8f8f8f]" items={[
          [18.5, <Svg w={18} h={15} vb="0 0 18 15"><path d="M.5.5h17v14H.5z" fill="#f3f3f3" stroke="#888" strokeWidth="1.500" /><path d="M2 3h9v10H2z" fill="#3d8a68" /><path d="M13 3v6" stroke="#999" /></Svg>],
          [117, <T w={163}>Review Component Data</T>], [862.5, <Min c="#888" />], [921, <Max c="#ddd" s={12} />], [980, <Close c="#888" s={12} />],
        ]} />
      </div>
      <div className="ml-[14px] mr-[7px] mt-[14px] flex flex-1 justify-between border-l border-r-2 border-t-2 border-[#666]">
        <div className="flex h-[58px] font-['Liberation_Sans'] text-[12px] font-bold leading-[14px] text-black">
          {rcols.map(([w, ls, ws], i) => (
            <div key={i} className={"flex shrink-0 flex-col items-center border-b-2 border-r-2 border-black " + (ls.length === 1 ? "justify-center" : ls[0] === "Nominal" ? "pt-[21px]" : "pt-[7px]")} style={{ width: w }}>
              {ls.map((l, j) => l && <T key={j} w={ws[j]}>{l}</T>)}
            </div>
          ))}
        </div>
        <div className="w-[19px] border-l border-[#ddd]"><div className="flex h-[19px] items-center justify-center border-b-2 border-[#777] bg-[#f3f3f3]"><Tri d="u" c="#000" s={9} /></div></div>
      </div>
    </div>
  );
}

const TC = ({ s }: { s: number }) => (
  <Svg w={s} vb="0 0 32 32"><path d="M16 0q2 0 3 1l12 12q2 3 0 6L19 31q-3 2-6 0L1 19q-2-3 0-6L13 1q1-1 3-1z" fill="#2a86c8" /><path d="M0 13h17M10 13q0 8 5 17M30 10q-6-4-10 1t0 10q4 4 10 0" stroke="#fff" strokeWidth="4" /></Svg>
);

function Indicator() {
  return (
    <>
      <div className="absolute left-[1808px] top-[24px] flex h-[41px] w-[103px] items-center rounded border border-[#aaa] bg-[#f0f0ef] pl-[3px]">
        <TC s={32} /><div className="ml-[4px] h-[35px] w-px bg-[#aaa]" />
        <div className="ml-[9px] flex gap-[3px]"><div className="h-[16px] w-[6px] bg-[#00aaff]" /><div className="h-[16px] w-[7px] bg-[#00aaff]" /></div>
        <div className="ml-[10px] h-[16px] w-[16px] bg-[#00aaff]" />
      </div>
      <div className="absolute left-[1658px] top-[68px] flex h-[55px] w-[253px] flex-col border border-[#777] bg-white font-['DejaVu_Sans'] text-[12px] leading-[14px] text-black">
        <div className="mt-[5px] flex justify-center pl-[4px]"><T w={238}>CAT6TS5TC1.RPT checkpoint. Verifying...</T></div>
        <div className="mx-[3px] mt-[1px] flex h-[11px] shrink-0 items-center gap-px border border-[#b5b5b5] bg-[#e6e6e6] pl-[2px]">
          {Array.from({ length: 38 }, (_, i) => <div key={i} className="h-[5px] w-[5px] bg-[#06b025]" />)}
        </div>
        <div className="mt-[2px] flex justify-end pr-[5px]"><T w={87}>StaticTestPlans</T></div>
      </div>
      <div className="absolute left-[1899px] top-[61px]"><Svg w={8} h={8} vb="0 0 8 8"><path d="M0 8l7-7v7z" fill="#fff" /><path d="M0 8l7-7v7" stroke="#777" /></Svg></div>
    </>
  );
}

/* ---------- Excel ---------- */
const colW: number[] = [165, 204, 102, 98, 87, 75, 51, 51, 51, ...Array(19).fill(51), 23];
const colN = "E F G H I J K L M N O P Q R S T U V W X Y Z AA AB AC AD AE AF A".split(" ");
const rowH = (r: number) => ({ 4: 27, 16: 27, 51: 13 } as Record<number, number>)[r] ?? (r <= 12 || (r >= 17 && r <= 21) ? 17 : 15);
const heads: [string, number][] = [
  ["chkUseVersionReportFormat", 158], ["chkLimitReportsToHighlightedPoints", 199], ["chkPrintHeaders", 91], ["chkIncludeDescription", 120], ["chkSelectUnselected", 110], ["chkPoint", 47], ["chkExtended", 66], ["chkSoilProp", 62], ["chkCoordinates", 78], ["chkLoads", 49],
  ["chkPipeProp", 64], ["chkSupport", 59], ["chkMate", 47], ["chkBend", 46], ["chkMate", 47], ["chkTee", 38], ["chkTempPr", 59], ["chkValve", 48], ["chkBeam", 49], ["chkFlange", 54], ["chkForce", 48], ["chkUserSif", 57], ["chkThermal", 62], ["chkReducer", 61], ["chkSeismic", 59], ["chkRigidProp", 68], ["chkEarth", 47], ["chkRefer", 47], ["chkUnit", 44],
];
const ones: Record<string, string> = { "18-4": "0", "19-4": "0", "20-4": "0", "18-6": "1", "19-6": "1", "18-8": "1", "19-13": "1", "20-17": "1" };

function Cell({ r, c }: { r: number; c: number }) {
  const inA = r >= 5 && r <= 12 && c <= 8;
  const inB = r >= 17 && r <= 21;
  const k = ones[`${r}-${c}`];
  const brown = c === 0 && (r === 4 || r === 16);
  const dark = inA || inB;
  const bottomDark = dark || (r === 4 && c <= 8) || r === 16;
  const bg = brown ? "bg-[#806000]" : (r === 5 && inA) || r === 17 ? "bg-[#1f4e78]" : inA || k ? "bg-[#f2f2f2]" : inB ? "bg-[#bfbfbf]" : "bg-white";
  return (
    <div className={`flex h-full shrink-0 items-center overflow-hidden border-b border-r pt-px ${bg} ${dark ? "border-r-black" : brown ? "border-r-[#806000]" : "border-r-[#d4d4d4]"} ${bottomDark ? "border-b-black" : "border-b-[#d4d4d4]"} ${k ? "justify-end pr-[2px]" : "pl-[2px]"}`} style={{ width: colW[c] }}>
      {k ?? (brown ? (r === 4 ? <span className="-ml-[2px] text-[18px] font-bold leading-none text-white"><T w={8}>t</T></span> : <span className="-ml-[8px] flex text-[18px] font-bold leading-none text-white"><T w={39}>port</T></span>)
        : r === 17 ? <span className="font-bold text-white"><T w={heads[c][1]}>{heads[c][0]}</T></span>
          : (inA && r > 5) || (inB && r > 17) ? <T w={15}>NA</T> : null)}
    </div>
  );
}

const gcol = "#b1b1b1", kcol = "#3b3b3b";
const bubble = (c: string, x: string) => <><path d="M7 3h24v18H16l-8 8v-8h-1z" fill={c === gcol ? "#ececec" : "#fff"} stroke={c} strokeWidth="1.500" /><path d={x} stroke={c} strokeWidth="2" /></>;
const sheet = (c: string) => <><path d="M3 3h24v20l-6 6H3z" fill={c === gcol ? "#ececec" : "#fff"} stroke={c} strokeWidth="1.500" /><path d="M3 9h24M3 15h24M3 21h20M9 3v26M15 3v26M21 3v20" stroke={c} strokeWidth="1.500" /></>;
const lock = <><path d="M18 18h13v12H18z" fill="#c4c4c4" stroke={gcol} /><path d="M20 18q0-6 4.500-6t4.500 6" stroke={gcol} strokeWidth="2" /></>;
const ei: Record<string, ReactNode> = {
  spell: <><text x="3" y="15" fontFamily="Open Sans" fontSize="15" fill={kcol} textLength="26" lengthAdjust="spacingAndGlyphs">abc</text><path d="M6 24l6 6L24 17" stroke="#3fae61" strokeWidth="2" /></>,
  thes: <><path d="M2 3h11q3 0 3 3v22q0-2-3-2H2zM30 3H19q-3 0-3 3v22q0-2 3-2h11z" fill="#fff" stroke={kcol} strokeWidth="1.700" /><path d="M6 16h6M6 21h6M20 11h6M20 16h6M20 21h6" stroke="#555" strokeWidth="1.300" /><path d="M6 11h6" stroke="#e33" strokeWidth="2" /></>,
  acc: <><path d="M6 2h13l6 7v8M6 2v27h11M18 2v8h7" stroke={kcol} strokeWidth="1.700" /><circle cx="24" cy="24" r="7" fill="#f3f2f0" stroke="#2a86c8" strokeWidth="2" strokeDasharray="9 3" /><path d="M24 18v6M19 24h10M24 24l-3 5" stroke="#2a86c8" strokeWidth="1.700" /></>,
  look: <><circle cx="19" cy="12" r="10.500" fill="#fff" stroke="#2a9bd8" strokeWidth="2" /><path d="M12 20L1 31" stroke="#2a9bd8" strokeWidth="2.500" /><path d="M19 6v1.500M19 9v8" stroke="#555" strokeWidth="2" /></>,
  trans: <><path d="M2 4h12l-3 3 3 7H2z" fill="#1672c4" /><text x="1" y="31" fontFamily="Open Sans" fontSize="19" fontWeight="bold" fill="#1672c4">a</text><text x="15" y="15" fontFamily="Noto Sans CJK JP, sans-serif" fontSize="15" fontWeight="bold" fill="#168a2a">あ</text><path d="M18 21h12v10l-4-4-8 3 4-5z" fill="#168a2a" /></>,
  nw: bubble(gcol, "M7 0v14M0 7h14"), del: bubble(gcol, "M0 0l12 12M12 0L0 12"), prev: bubble(gcol, "M0 6h14M5 1L0 6l5 5"), next: bubble(gcol, "M0 6h14M9 1l5 5-5 5"), show: bubble(kcol, ""),
  notes: <path d="M3 3h26v17l-9 9H3zM20 29v-9h9" fill="#fff" stroke={kcol} strokeWidth="1.700" />,
  psh: <>{sheet(gcol)}{lock}</>,
  allow: <>{sheet(gcol)}<path d="M12 30l2-7 13-13 4 4-13 13z" fill="#e6e6e6" stroke={gcol} strokeWidth="1.500" /></>,
  unsh: <>{sheet(kcol)}<circle cx="25" cy="20" r="4.500" fill="#fff" stroke="#2a86c8" strokeWidth="1.700" /><path d="M18 32q0-7 7-7t7 7" fill="#fff" stroke="#2a86c8" strokeWidth="1.700" /></>,
  ink: <><path d="M2 24V16L12 2h18L20 19" stroke={kcol} strokeWidth="1.500" /><path d="M1 30q10-16 13-13t-2 8q8-13 10-9t8-1M15 28q6-10 8-6t8-2" stroke="#e33" strokeWidth="2" /></>,
};
type EB = [number, string, [string, number][], string?];
const eg: { sep: number; name: string; nc: number; nw: number; items: EB[] }[] = [
  { sep: 2041, name: "Proofing", nc: 1980.5, nw: 44, items: [[1950.5, "spell", [["Spelling", 42]]], [2004, "thes", [["Thesaurus", 54]]]] },
  { sep: 2127, name: "Accessibility", nc: 2084.5, nw: 61, items: [[2085, "acc", [["Check", 33], ["Accessibility", 65]]]] },
  { sep: 2188, name: "Insights", nc: 2157.5, nw: 41, items: [[2158, "look", [["Smart", 31], ["Lookup", 40]]]] },
  { sep: 2256, name: "Language", nc: 2222.5, nw: 51, items: [[2222.5, "trans", [["Translate", 47]]]] },
  { sep: 2555, name: "Comments", nc: 2406, nw: 53, items: [[2294, "nw", [["New", 24], ["Comment", 54]], "g"], [2344.5, "del", [["Delete", 33]], "g"], [2395.5, "prev", [["Previous", 45], ["Comment", 54]], "g"], [2454, "next", [["Next", 24], ["Comment", 54]], "g"], [2515.5, "show", [["Show", 29], ["Comments", 59]]]] },
  { sep: 2613, name: "Notes", nc: 2584, nw: 29, items: [[2584.5, "notes", [["Notes", 31]], "d"]] },
  { sep: 2850, name: "Protect", nc: 2732, nw: 37, items: [[2643, "psh", [["Protect", 38], ["Sheet", 30]], "g"], [2694.5, "psh", [["Protect", 38], ["Workbook", 55]], "g"], [2753.5, "allow", [["Allow Edit", 53], ["Ranges", 38]], "g"], [2812.5, "unsh", [["Unshare", 43], ["Workbook", 55]]]] },
  { sep: 2908, name: "Ink", nc: 2879.5, nw: 16, items: [[2879.5, "ink", [["Hide", 25], ["Ink", 17]]]] },
];

function Excel() {
  let prev = 1920;
  const sheets: [string, number, number][] = [["TPDetails", 53, 83], ["File", 19, 46], ["Home", 35, 61], ["View", 27, 54], ["Show", 31, 57], ["Select", 34, 60], ["Insert-Modify", 78, 108], ["Loads", 34, 60], ["Analysis", 46, 74]];
  return (
    <div className="absolute left-[1920px] top-0 flex h-[1040px] w-[1920px] flex-col overflow-hidden bg-[#e6e6e6]">
      <div className="relative flex h-[34px] shrink-0 bg-[#217346] text-[12px] text-[#a9d0b9]">
        <div className="absolute right-0 top-0">
          <Svg w={500} h={34} vb="0 0 500 34"><g stroke="#1c633b" strokeWidth="3.500"><circle cx="8" cy="15" r="4" /><path d="M12 15h175l30 17M13 33q15-20 30 0M60 33l7-3 7 3M375 28h125M360 33l9-7M420 33L445 0M436 33L460 0" /><path d="M255 2q-12 14 0 30M297 2q12 14 0 30M262 6h27v26M289 17L266 30" strokeWidth="6" /></g></Svg>
        </div>
        <Track from={1920} className="relative h-full items-center" items={[
          [1968, <span className="text-[#5f9f7b]"><T w={50}>AutoSave</T></span>],
          [2019, <div className="flex h-[16px] w-[37px] items-center rounded-full border border-[#5f9f7b] pl-[4px] text-[10px] text-[#5f9f7b]"><div className="mr-[7px] h-[7px] w-[7px] rounded-full bg-[#5f9f7b]" /><T w={13}>Off</T></div>],
          [2061, <Svg w={16}><path d="M.5.5h13l2 2v13H.5zM3.500.5v6h9v-6M4 15.500v-5h7.500v5" stroke="#a9d0b9" strokeWidth="1.200" /></Svg>],
          [2090, <Svg w={15}><path d="M2 1v6h6M2 7q3-6 8-5 5 2 3 8l-6 6" stroke="#5f9f7b" strokeWidth="1.300" /></Svg>], [2104, <Tri c="#5f9f7b" s={5} />],
          [2125, <Svg w={15}><path d="M14 1v6H8M14 7Q11 1 6 2 1 4 3 10l6 6" stroke="#5f9f7b" strokeWidth="1.300" /></Svg>], [2139, <Tri c="#5f9f7b" s={5} />],
          [2159, <div className="flex flex-col items-center gap-px"><div className="h-px w-[5px] bg-white" /><Tri c="#fff" s={5} /></div>],
          [2880, <T w={142}>TestData  -  Shared  -  Excel</T>], [3578, <T w={134}>Tayyaba Mehreen - Intern</T>],
          [3678, <Svg w={13}><path d="M.5 1.500h15v13H.5zM.5 4.500h15M8 13V7M5.500 9L8 6.500 10.500 9" stroke="#83b598" /></Svg>],
          [3725, <Min c="#83b598" w={10} />], [3771, <Restore c="#83b598" s={10} />], [3817, <Close c="#83b598" s={11} />],
        ]} />
      </div>
      <div className="flex h-[126px] shrink-0 flex-col bg-[#f3f2f0] text-[13px] leading-[16px] text-[#444]">
        <Track from={1920} className="h-[32px] items-center" items={[
          [1946.5, <T w={19}>File</T>], [2006, <T w={35}>Home</T>], [2069, <T w={32}>Insert</T>], [2151.5, <T w={71}>Page Layout</T>], [2243.5, <T w={53}>Formulas</T>], [2312.5, <T w={27}>Data</T>],
          [2375, <div className="border-b-3 border-[#217346] pb-[4px] pt-[7px] font-bold leading-[14px] text-[#333]"><T w={42}>Review</T></div>],
          [2437, <T w={28}>View</T>], [2491.5, <T w={27}>Help</T>],
          [2542, <Svg w={15}><circle cx="10" cy="6" r="5" stroke="#555" strokeWidth="1.200" /><path d="M6.500 9.500L1 15.500" stroke="#555" strokeWidth="1.300" /></Svg>], [2643.5, <T w={165}>Tell me what you want to do</T>],
          [3686, <div className="flex h-[23px] w-[67px] items-center justify-center gap-[4px] border border-[#ddd] bg-white font-semibold text-[#217346]"><Svg w={12}><path d="M2 6H.8v9.200h12V10M4 11q0-6 6-6V2l5.500 4.500L10 11V8q-4 0-6 3z" stroke="#217346" strokeWidth="1.300" /></Svg><T w={35}>Share</T></div>],
          [3778, <div className="flex h-[23px] w-[98px] items-center justify-center gap-[4px] border border-[#ddd] bg-white font-semibold text-[#217346]"><Svg w={12}><path d="M1 1h14v10H8l-4 4v-4H1z" stroke="#217346" strokeWidth="1.400" /></Svg><T w={66}>Comments</T></div>],
        ]} />
        <div className="flex h-[94px] pt-[2px]">
          {eg.map((g) => {
            const from = prev;
            prev = g.sep;
            return (
              <div key={g.name} className="flex h-[88px] shrink-0 flex-col justify-between border-r border-[#bdbdbd]" style={{ width: g.sep - from }}>
                <Track from={from} className="items-start" items={g.items.map(([c, ic, ls, f]) => [c, (
                  <div className={"flex flex-col items-center " + (f === "g" ? "text-[#b0b0b0]" : "text-[#444]")}>
                    <div className="mb-[4px] mt-[2px]"><Svg w={31} h={31} vb="0 0 32 32">{ei[ic]}</Svg></div>
                    {ls.map(([l, w]) => <T key={l} w={w}>{l}</T>)}
                    {f === "d" && <div className="mt-[5px]"><Tri c="#555" s={5} /></div>}
                  </div>
                )])} />
                <Track from={from} className="-mt-[4px] h-[12px] items-center text-[12px]" items={[[g.nc, <T w={g.nw}>{g.name}</T>]]} />
              </div>
            );
          })}
          <div className="flex flex-1 items-end justify-end pb-[4px] pr-[11px]"><Chev d="u" s={9} c="#666" /></div>
        </div>
      </div>
      <div className="flex h-[47px] shrink-0 bg-gradient-to-b from-[#cfcfcf] via-[#e6e6e6] via-25% to-[#e6e6e6] pt-[11px] text-[12.500px] text-[#444]">
        <div className="ml-[5px] flex h-[26px] w-[102px] items-center justify-between border border-[#c6c6c6] bg-white pl-[6px] pr-[8px]"><T w={21}>E20</T><Tri c="#666" s={7} /></div>
        <div className="ml-[15px] mr-[14px] mt-[8px] h-[10px] border-l-2 border-dotted border-[#aaa]" />
        <div className="flex h-[26px] w-[110px] items-center border border-[#c6c6c6] bg-white">
          <Track className="items-center" items={[[18, <Svg w={11}><path d="M2 1l12 14M14 1L2 15" stroke="#b5b5b5" strokeWidth="2.500" /></Svg>], [55, <Svg w={13} h={12}><path d="M1 9l4 5L15 1" stroke="#b5b5b5" strokeWidth="2.500" /></Svg>], [91, <span className="font-['Liberation_Serif'] text-[15px] italic leading-none text-[#555]">f<span className="text-[11px]">x</span></span>]]} />
        </div>
        <div className="ml-[3px] flex h-[26px] w-[1666px] items-center justify-between border border-[#c6c6c6] bg-[#fdfdfd] pl-[12px] pr-[4px]"><T w={18}>NA</T><Chev d="d" s={8} c="#666" /></div>
      </div>
      <div className="flex h-[783px] shrink-0">
        <div className="flex w-[1899px] shrink-0 flex-col overflow-hidden border-b border-r border-[#9b9b9b]">
          <div className="flex h-[16px] shrink-0 border-b border-[#9b9b9b] text-[12px] leading-[15px] text-[#222]">
            <div className="flex w-[23px] shrink-0 items-end justify-end border-r border-[#ababab] pb-[3px] pr-[3px]"><Svg w={8}><path d="M16 0v16H0z" fill="#b0b0b0" /></Svg></div>
            {colN.map((n, i) => <div key={i} className={"flex shrink-0 overflow-hidden border-r border-[#b5b5b5] " + (i === colN.length - 1 ? "justify-end" : "justify-center")} style={{ width: colW[i] }}><T w={n.length * 7}>{n}</T></div>)}
          </div>
          {Array.from({ length: 48 }, (_, i) => i + 4).map((r) => (
            <div key={r} className="flex shrink-0 font-['Lato'] text-[12px] leading-[15px] text-[#222]" style={{ height: rowH(r) }}>
              <div className="flex w-[23px] shrink-0 items-end justify-center border-b border-r border-b-[#b5b5b5] border-r-[#9b9b9b] font-['Open_Sans'] text-[12px] leading-[14px]"><T w={r > 9 ? 13 : 7}>{r}</T></div>
              {colW.map((_, c) => <Cell key={c} r={r} c={c} />)}
            </div>
          ))}
        </div>
        <div className="ml-[3px] flex w-[15px] flex-col bg-[#dadada] pt-[2px]">
          <div className="flex h-[15px] items-center justify-center border border-[#ababab] bg-white"><Tri d="u" c="#666" s={7} /></div>
          <div className="h-[46px]" /><div className="flex-1 border border-[#ababab] bg-white" />
          <div className="flex h-[15px] items-center justify-center border border-[#ababab] bg-white"><Tri c="#666" s={7} /></div>
        </div>
      </div>
      <div className="flex h-[28px] shrink-0 items-start text-[13px] text-[#555]">
        <div className="flex h-[27px] w-[100px] shrink-0 items-center"><Track items={[[29, <Tri d="l" c="#bbb" s={8} />], [58, <Tri d="r" c="#17693c" s={8} />]]} /></div>
        {sheets.map(([l, w, cw]) => (
          <div key={l} className="flex h-[27px] shrink-0 items-center" style={{ width: cw }}><div className="h-[20px] w-px bg-[#a0a0a0]" /><div className="flex flex-1 justify-center"><T w={w}>{l}</T></div></div>
        ))}
        <div className="flex h-[25px] w-[63px] shrink-0 items-center justify-center border-x border-b-2 border-x-[#ababab] border-b-[#217346] bg-white font-bold text-[#217346]"><T w={38}>Result</T></div>
        <div className="flex h-[27px] w-[57px] items-center justify-center"><T w={32}>Tools</T></div>
        <div className="mt-[4px] h-[20px] w-px bg-[#a0a0a0]" />
        <div className="flex h-[27px] w-[154px] items-center pl-[15px]"><T w={124}>BentleyCloudServices</T></div>
        <div className="mt-[4px] h-[20px] w-px bg-[#a0a0a0]" />
        <Track from={2899.5} className="h-[27px] items-center" items={[
          [2960, <T w={88}>ConnectionClie</T>], [3017, <b className="text-[#17693c]">...</b>],
          [3043.5, <Svg w={17}><circle cx="8" cy="8" r="7.300" stroke="#777" /><path d="M8 4v8M4 8h8" stroke="#666" strokeWidth="1.300" /></Svg>],
          [3073, <div className="h-[11px] border-l-2 border-dotted border-[#aaa]" />],
        ]} />
        <div className="ml-[16px] mt-[7px] flex h-[15px] w-[732px] shrink-0 bg-[#dadada]">
          <div className="flex w-[15px] items-center justify-center border border-[#ababab] bg-white"><Tri d="l" c="#666" s={7} /></div>
          <div className="ml-[72px] w-[556px] border border-[#ababab] bg-white" />
          <div className="ml-auto flex w-[15px] items-center justify-center border border-[#ababab] bg-white"><Tri d="r" c="#666" s={7} /></div>
        </div>
      </div>
      <div className="flex flex-1 items-center border-t border-[#c6c6c6] bg-[#f3f2f0] text-[12px] text-[#555]">
        <Track from={1920} className="h-full items-center" items={[
          [1944, <T w={31}>Ready</T>],
          [3449, <Svg w={16} h={17}><path d="M0 1h15v8H0z" fill="#444" /><circle cx="11" cy="11" r="3.500" fill="#f3f2f0" stroke="#444" strokeWidth="2" /><path d="M3 14h5" stroke="#444" strokeWidth="2" /></Svg>],
          [3500, <span className="text-[#333]"><T w={82}>Display Settings</T></span>],
          [3579, <div className="flex h-[21px] w-[38px] items-center justify-center bg-[#c6c6c6]"><Svg w={14}><path d="M1 2h14v12H1zM1 6h14M1 10h14M5.500 2v12M10.500 2v12" stroke="#555" strokeWidth="1.300" /></Svg></div>],
          [3616.5, <Svg w={14}><path d="M1 1h14v14H1zM4 4h8v8H4zM6 6h4M6 8h4M6 10h4" stroke="#555" strokeWidth="1.200" /></Svg>],
          [3654.5, <Svg w={14}><path d="M1 1h14v14H1zM5 1v8h5V1M1 9h4" stroke="#555" strokeWidth="1.300" /></Svg>],
          [3681.5, <div className="h-[2px] w-[6px] bg-[#555]" />],
          [3739, <div className="flex h-[12px] w-[100px] items-center"><div className="h-px w-[37px] bg-[#999]" /><div className="h-[12px] w-[5px] bg-[#666]" /><div className="h-px w-[8px] bg-[#999]" /><div className="h-[6px] w-px bg-[#999]" /><div className="h-px flex-1 bg-[#999]" /></div>],
          [3796, <Svg w={8} vb="0 0 8 8"><path d="M4 0v8M0 4h8" stroke="#555" strokeWidth="2" /></Svg>],
          [3821, <T w={20}>80%</T>],
        ]} />
      </div>
    </div>
  );
}

/* ---------- taskbars ---------- */
const check = <><circle cx="19" cy="19" r="5" fill="#6bb700" stroke="#e8f5d8" /><path d="M16.500 19l2 2 3-3.500" stroke="#fff" strokeWidth="1.500" /></>;
const apps: ReactNode[] = [
  <><path d="M2 12Q3 1 13 1t10 12H8q1 7 8 7 4 0 6-1.500v4Q19 24 15 24 4 24 4 14q0-7 7-9-3 2-3 5h9q0-5-5-5-7 0-10 7z" fill="#0f7bd8" /></>,
  <><path d="M2 7h20v16H2z" fill="#fff" /><path d="M8 7q0-6 4-6t4 6" stroke="#ddd" strokeWidth="1.600" /><path d="M7 10h4.500v4.500H7z" fill="#f1511b" /><path d="M12.500 10H17v4.500h-4.500z" fill="#80cc28" /><path d="M7 15.500h4.500V20H7z" fill="#00adef" /><path d="M12.500 15.500H17V20h-4.500z" fill="#fbbc09" /></>,
  <path d="M0 10l12-8 12 8v13H0zM3 10l9 7 2-2-3-5z" fill="#fff" fillRule="evenodd" />,
  <><path d="M11 6h13v13H11z" fill="#fff" stroke="#0f72c6" strokeWidth="1.500" /><path d="M11 6l7 6 6-6" stroke="#0f72c6" strokeWidth="2" /><path d="M0 3l13-3v24L0 21z" fill="#0f72c6" /><circle cx="6.500" cy="12" r="3.500" stroke="#fff" strokeWidth="2" /></>,
  <><circle cx="12" cy="4" r="3.500" fill="#7b83eb" /><circle cx="20" cy="6" r="2.500" fill="#5059c9" /><path d="M9 9h14v8q-2 5-7 5-6 0-7-5z" fill="#7b83eb" /><rect y="6" width="13" height="13" rx="1" fill="#4b53bc" /><path d="M3.500 9.500h6M6.500 9.500V16" stroke="#fff" strokeWidth="1.800" />{check}</>,
  <><path d="M1 3h9l2 3h11v17H1z" fill="#f3c64d" /><path d="M1 7h22v16H1z" fill="#fbdf83" /><path d="M5 23v-9h14v9h-4v-5H9v5z" fill="#3cb0e8" /></>,
  null,
  <><path d="M12 0l12 12-12 12L0 12z" fill="#0b86cf" /><path d="M1 9h11M7 9q0 7 4 13M22 8q-5-3-8 1t0 7q3 3 8 0" stroke="#fff" strokeWidth="2.700" /></>,
  <><circle cx="12" cy="12" r="11.500" fill="#e33b2e" /><path d="M2 6.500A11.500 11.500 0 0012 23.500l5-9-9.500 0z" fill="#2da94f" /><path d="M12 23.500A11.500 11.500 0 0022.500 7.500H12l5 7z" fill="#fdd633" /><circle cx="12" cy="12" r="5.500" fill="#fff" /><circle cx="12" cy="12" r="4.300" fill="#4285f4" /></>,
  <><circle cx="11" cy="11" r="9.500" fill="#00aff0" /><circle cx="6" cy="6" r="5" fill="#00aff0" /><path d="M15 7q-1-2.500-4-2.500T7.500 7.500q0 2 3.500 3t4 3q0 3-4 3t-4-2.500" stroke="#fff" strokeWidth="2.300" />{check}</>,
  <><rect width="24" height="24" rx="2" fill="#0b4f96" /><path d="M0 2q0-2 2-2h4q0 14 18 20v2Q2 20 0 4z" fill="#58b947" /><path d="M6 0h14q-6 9 4 16v3Q6 16 6 0z" fill="#fff" /></>,
  <><path d="M8 2l13 3-4 17-13-3z" fill="#8ec6d8" stroke="#527b8a" /><path d="M8 2l13 3-1 3L7 5z" fill="#dfe9ec" /><path d="M17 22l4 1 2-16" stroke="#777" strokeWidth="1.500" /></>,
  <><path d="M12 3h11v18H12z" fill="#fff" stroke="#1d7044" /><path d="M14 6h3M18.500 6h3M14 9.500h3M18.500 9.500h3M14 13h3M18.500 13h3M14 17h3M18.500 17h3" stroke="#1d7044" strokeWidth="2" /><path d="M0 3l14-3v24L0 21z" fill="#1d7044" /><path d="M4 8l5 8M9 8l-5 8" stroke="#fff" strokeWidth="2" /></>,
  <><path d="M9 8h14l-2 16H8z" fill="#fff" stroke="#222" /><path d="M11 12h9M11 15h9M10 18h10M10 21h9" stroke="#2a3ad0" strokeWidth="1.400" /><path d="M7 1h16l-5 15H2z" fill="#21d668" stroke="#083d1c" /><path d="M10 6h8M9 9h8" stroke="#083d1c" /></>,
  <><rect width="24" height="24" rx="2" fill="#0b4f96" /><circle cx="12" cy="8" r="3" fill="#fff" /><circle cx="6" cy="10" r="2" fill="#fff" /><circle cx="18" cy="10" r="2" fill="#fff" /><path d="M2 19v-4q1-3 4-3t4 2q4-4 8-2 4 0 4 3v4z" fill="#fff" /><path d="M9 11q3-2 6 0l1 9H8z" fill="#fff" stroke="#0b4f96" strokeWidth=".7" /></>,
];
function Apps({ cw, s, bar }: { cw: number; s: number; bar: number }) {
  return (
    <>
      {apps.map((a, i) => {
        const orange = i === 13;
        const run = i >= 2;
        return (
          <div key={i} className={"flex h-full shrink-0 flex-col items-center justify-end " + (i === 6 ? "bg-white/20" : orange ? "bg-[#ad6227]" : "")} style={{ width: cw }}>
            <div className="flex flex-1 items-center pt-[2px]">{i === 6 ? <Pipes w={s} h={s} /> : <Svg w={s} vb="0 0 24 24">{a}</Svg>}</div>
            <div className={run ? (orange ? "bg-[#ff7a00]" : "bg-[#76b9ed]") : ""} style={{ width: i === 6 || orange ? cw : bar, height: s > 26 ? 3 : 2 }} />
          </div>
        );
      })}
    </>
  );
}
const WinLogo = ({ s }: { s: number }) => <Svg w={s}><path d="M0 2.300l6.500-.9v6.100H0zM7.300 1.300L16 0v7.500H7.300zM0 8.300h6.500v6.200L0 13.600zM7.300 8.300H16V16l-8.700-1.300z" fill="#fff" /></Svg>;
const TaskView = ({ s }: { s: number }) => <Svg w={s}><path d="M1 0v2.500h9V0M1 5h9v6H1zM1 16v-2.500h9V16M14 0v3M14 5v3M14 10v6" stroke="#fff" strokeWidth="1.200" /></Svg>;

function LeftTaskbar() {
  return (
    <div className="absolute left-0 top-[1030px] flex h-[50px] w-[1920px] bg-[linear-gradient(90deg,#1b2827_0,#1b2827_60px,#333_480px,#333_1500px,#1d2726_1750px,#1b2827_1920px)] text-white">
      <div className="flex w-[60px] items-center justify-center"><WinLogo s={20} /></div>
      <div className="flex w-[430px] items-center border-t border-[#aaa] bg-[#f2f2f2]">
        <Svg w={28} className="ml-[11px]"><circle cx="8" cy="8" r="6.700" stroke="#111" strokeWidth="2" /></Svg>
        <div className="w-[12px]" /><span className="text-[18px] text-[#3d3d3d]"><T w={152}>Type here to search</T></span>
        <Svg w={15} h={22} className="ml-[194px]" vb="0 0 15 22"><path d="M5 1h5v13H5zM1 9v5q0 3 3 3h7q3 0 3-3V9M7.500 17v4" stroke="#222" strokeWidth="1.400" /></Svg>
      </div>
      <div className="flex w-[63px] items-center justify-center"><TaskView s={20} /></div>
      <Apps cw={62} s={29} bar={51} />
      <Track from={1483} className="items-center" items={[
        [1619, <Svg w={18}><circle cx="4.500" cy="6.500" r="2.300" stroke="#fff" /><path d="M0 15q0-5.500 4.500-5.500T9 15M6 9q1-2 5-2 4.500 0 4.500 5" stroke="#fff" /><circle cx="11.500" cy="3.500" r="2.500" stroke="#fff" /></Svg>],
        [1665, <Svg w={15}><path d="M1 12l7-8 7 8" stroke="#fff" strokeWidth="1.300" /></Svg>],
        [1696, <Svg w={19}><path d="M4 6h10v8H4z" fill="#fff" stroke="#fff" /><path d="M14 8h2v4h-2M1 1v3h4V1M3 4v4" stroke="#fff" strokeWidth="1.400" /></Svg>],
        [1726, <Svg w={17}><path d="M1 15Q1 1 15 1M5 15Q5 5 15 5M9 15q0-6 6-6" stroke="#ccc" strokeWidth="1.300" /><circle cx="13.500" cy="13.500" r="1.700" fill="#fff" /></Svg>],
        [1754, <Svg w={19}><path d="M1 6h2l4-4v12l-4-4H1z" stroke="#fff" /><path d="M9.500 5.500q2 2.500 0 5" stroke="#fff" /><path d="M11.500 3.500q3 4.500 0 9M13.500 1.500q4.500 6.500 0 13" stroke="#999" /></Svg>],
        [1812, <div className="flex flex-col items-center gap-[5px] text-[14px] leading-[18px]"><T w={59}>12:13 PM</T><T w={68}>8/23/2019</T></div>],
        [1879, <Svg w={20}><path d="M.5 1h15v11.500h-5L8 15.500l-2.500-3h-5z" stroke="#fff" /></Svg>],
      ]} />
      <div className="ml-[35px] w-px bg-[#777]" />
    </div>
  );
}
function RightTaskbar() {
  return (
    <div className="absolute left-[1920px] top-[1040px] flex h-[40px] w-[1920px] bg-[linear-gradient(90deg,#1e2827_0,#1b2625_1000px,#152a2a_1110px,#1a1413_1230px,#181212_1380px,#211315_1440px,#1a1a1a_1520px,#182626_1600px,#1b2524_1920px)] text-white">
      <div className="flex w-[48px] items-center justify-center"><WinLogo s={16} /></div>
      <div className="flex w-[48px] items-center justify-center"><Svg w={17}><circle cx="8" cy="8" r="6.800" stroke="#fff" strokeWidth="1.700" /></Svg></div>
      <div className="flex w-[50px] items-center justify-center"><TaskView s={16} /></div>
      <Apps cw={49} s={24} bar={40} />
      <div className="ml-auto flex flex-col items-center justify-center pr-[5px] text-[11.500px] leading-[18px]"><T w={48}>12:13 PM</T><T w={52}>8/23/2019</T></div>
    </div>
  );
}

export default function App() {
  return (
    <div className="relative h-[1080px] w-[3840px] overflow-hidden bg-[#f0f0f0] font-['Open_Sans']">
      <TestComplete />
      <Report />
      <Review />
      <MainWindow />
      <SearchDialog />
      <Indicator />
      <Excel />
      <LeftTaskbar />
      <RightTaskbar />
    </div>
  );
}
